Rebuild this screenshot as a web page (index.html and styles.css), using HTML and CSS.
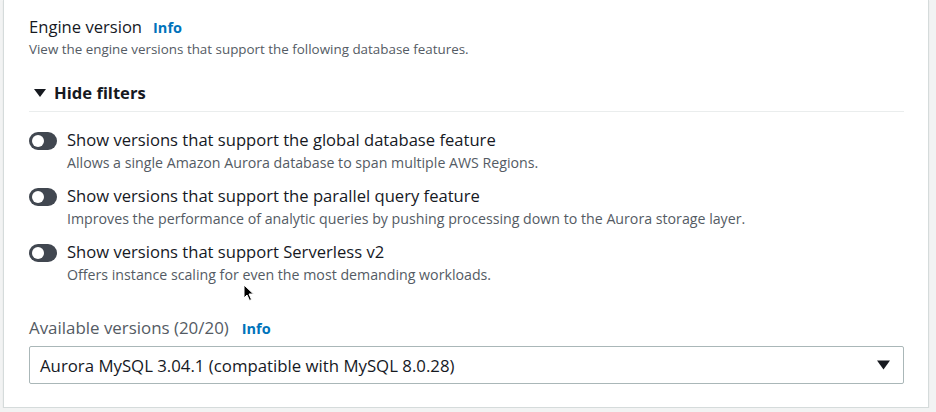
FILE: index.html
```html
<!DOCTYPE html>
<html>
<head>
<meta charset="utf-8">
<link rel="stylesheet" href="styles.css">
</head>
<body>
<div class="card">
  <div class="header">
    <div class="title-row"><span class="title">Engine version</span><a class="info">Info</a></div>
    <div class="desc">View the engine versions that support the following database features.</div>
  </div>
  <div class="filters-toggle">
    <svg class="caret" width="12" height="10" viewBox="0 0 12 10"><path d="M0 1 L12 1 L6 9 Z" fill="#16191f"/></svg>
    <span>Hide filters</span>
  </div>
  <div class="divider"></div>
  <div class="toggles">
    <div class="toggle-item">
      <span class="switch"><span class="knob"></span></span>
      <div class="toggle-text">
        <div class="toggle-label">Show versions that support the global database feature</div>
        <div class="toggle-desc">Allows a single Amazon Aurora database to span multiple AWS Regions.</div>
      </div>
    </div>
    <div class="toggle-item">
      <span class="switch"><span class="knob"></span></span>
      <div class="toggle-text">
        <div class="toggle-label">Show versions that support the parallel query feature</div>
        <div class="toggle-desc">Improves the performance of analytic queries by pushing processing down to the Aurora storage layer.</div>
      </div>
    </div>
    <div class="toggle-item">
      <span class="switch"><span class="knob"></span></span>
      <div class="toggle-text">
        <div class="toggle-label">Show versions that support Serverless v2</div>
        <div class="toggle-desc">Offers instance scaling for even the most demanding workloads.</div>
      </div>
    </div>
  </div>
  <div class="field">
    <div class="field-label"><span>Available versions (20/20)</span><a class="info">Info</a></div>
    <div class="select">
      <span>Aurora MySQL 3.04.1 (compatible with MySQL 8.0.28)</span>
      <svg width="13" height="10" viewBox="0 0 13 10"><path d="M0 0.5 L13 0.5 L6.5 9.5 Z" fill="#16191f"/></svg>
    </div>
  </div>
  <svg class="cursor" width="12" height="18" viewBox="0 0 12 18"><path d="M1 1 L1 14 L4 11 L6.5 16.5 L8.5 15.5 L6 10 L10.5 10 Z" fill="#000" stroke="#fff" stroke-width="1"/></svg>
</div>
</body>
</html>
```
FILE: styles.css
```css
html, body {
  margin: 0;
  padding: 0;
  background: #f2f3f3;
  font-family: "Open Sans", "Noto Sans", sans-serif;
  color: #16191f;
}
.card {
  margin-left: 3px;
  width: 926px;
  height: 408px;
  background: #fff;
  border: 1px solid #d5dbdb;
  border-top: none;
  box-shadow: 0 1px 1px rgba(0,0,0,0.10);
  padding: 0 24px 0 25px;
  box-sizing: border-box;
  position: relative;
}
.header {
  padding-top: 16px;
}
.title-row {
  display: flex;
  align-items: baseline;
  gap: 11px;
}
.title {
  font-size: 16.6px;
  line-height: 22px;
}
.info {
  color: #0073bb;
  font-weight: 700;
  font-size: 14.5px;
}
.desc {
  font-size: 13.4px;
  color: #545b64;
  line-height: 20px;
  margin-top: 1px;
}
.filters-toggle {
  display: flex;
  align-items: center;
  gap: 8px;
  margin-top: 23px;
  padding-left: 5px;
  font-size: 16.6px;
  font-weight: 700;
  line-height: 22px;
  color: #16191f;
}
.divider {
  height: 1px;
  background: #eaeded;
  margin-top: 7px;
}
.toggles {
  padding-top: 17px;
  display: flex;
  flex-direction: column;
  gap: 12px;
}
.toggle-item {
  display: flex;
  gap: 10px;
}
.switch {
  width: 28px;
  height: 18px;
  border-radius: 9px;
  background: #414750;
  position: relative;
  margin-top: 3px;
  flex: none;
}
.knob {
  position: absolute;
  left: 3px;
  top: 3px;
  width: 12px;
  height: 12px;
  border-radius: 50%;
  background: #fff;
}
.toggle-label {
  font-size: 16.6px;
  line-height: 22px;
}
.toggle-desc {
  font-size: 14.2px;
  line-height: 20px;
  margin-top: 2px;
  color: #545b64;
}
.cursor {
  position: absolute;
  left: 239px;
  top: 284px;
}
.field {
  margin-top: 32px;
}
.field-label {
  display: flex;
  align-items: baseline;
  gap: 13px;
  font-size: 16.9px;
  line-height: 22px;
  color: #545b64;
}
.select {
  margin-top: 6px;
  height: 38px;
  border: 1px solid #aab7b8;
  border-radius: 2px;
  box-sizing: border-box;
  display: flex;
  align-items: center;
  justify-content: space-between;
  padding: 0 13px 0 10px;
  font-size: 16.8px;
}
```
